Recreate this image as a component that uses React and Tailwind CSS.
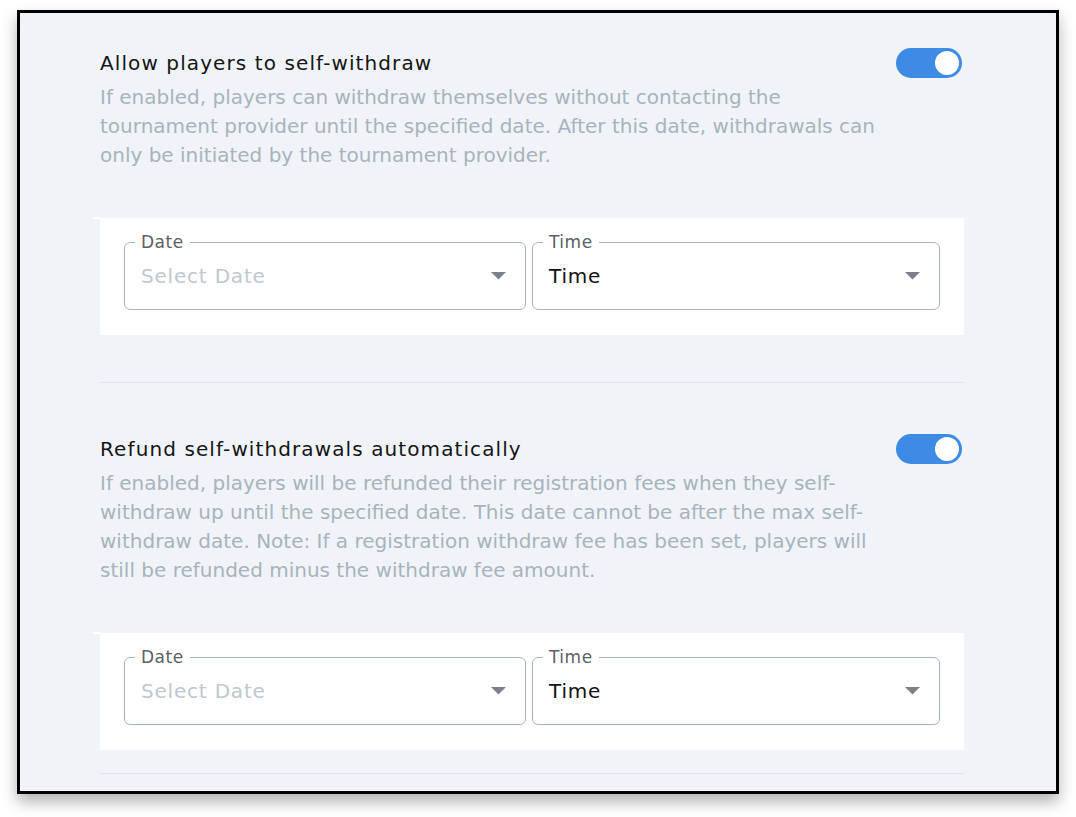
import { useState } from "react";

const Toggle = ({ on, onClick }) => (
  <button
    onClick={onClick}
    className={`relative shrink-0 w-[66px] h-[30px] rounded-full mr-[2px] transition-colors ${
      on ? "bg-[#3d8be5]" : "bg-[#c5ccd4]"
    }`}
  >
    <span
      className={`absolute top-[3px] w-[24px] h-[24px] rounded-full bg-white transition-all ${
        on ? "right-[3px]" : "left-[3px]"
      }`}
    />
  </button>
);

const Caret = () => (
  <svg width="15" height="8" viewBox="0 0 15 8" className="shrink-0">
    <path d="M0 0 L15 0 L7.5 7.5 Z" fill="#7b8089" />
  </svg>
);

const SelectField = ({ label, value, placeholder, width }) => (
  <div
    className={`relative h-[68px] ${width} border border-[#a9b3c1] rounded-[6px] flex items-center pl-4 pr-[19px]`}
  >
    <span className="absolute -top-[12px] left-[10px] bg-white px-[6px] text-[17px] leading-[22px] tracking-[0.5px] text-[#5c6067]">
      {label}
    </span>
    <span
      className={`flex-1 text-[20px] tracking-[0.8px] ${
        value ? "text-[#111]" : "text-[#bfc7cf]"
      }`}
    >
      {value || placeholder}
    </span>
    <Caret />
  </div>
);

const DatePanel = () => (
  <div className="relative bg-white px-6 pt-6 pb-[25px] flex gap-[6px]">
    <span className="absolute -left-[7px] -top-[1px] w-[8px] h-[2px] bg-white" />
    <SelectField label="Date" placeholder="Select Date" width="w-[402px]" />
    <SelectField label="Time" value="Time" width="w-[408px]" />
  </div>
);

const Section = ({ title, desc, on, onToggle }) => (
  <div>
    <div className="flex justify-between items-center h-[30px]">
      <h2 className="text-[20px] leading-[28px] tracking-[1.1px] text-[#151515]">
        {title}
      </h2>
      <Toggle on={on} onClick={onToggle} />
    </div>
    <p className="mt-[5px] w-[800px] text-[20px] leading-[29px] text-[#a9b3bc]">
      {desc}
    </p>
  </div>
);

export default function App() {
  const [selfWithdraw, setSelfWithdraw] = useState(true);
  const [autoRefund, setAutoRefund] = useState(true);

  return (
    <div
      className="bg-white w-[1076px] h-[817px] pl-[17px] pt-[10px]"
      style={{ fontFamily: '"DejaVu Sans", "Noto Sans", sans-serif' }}
    >
      <div className="w-[1042px] h-[784px] border-[3px] border-black bg-[#f0f3f8] shadow-[0_8px_14px_rgba(0,0,0,0.3)] overflow-hidden">
        <div className="ml-[80px] w-[864px] pt-[35px]">
          <Section
            title="Allow players to self-withdraw"
            desc="If enabled, players can withdraw themselves without contacting the tournament provider until the specified date. After this date, withdrawals can only be initiated by the tournament provider."
            on={selfWithdraw}
            onToggle={() => setSelfWithdraw(!selfWithdraw)}
          />
          <div className="mt-[48px]">
            <DatePanel />
          </div>
          <div className="mt-[47px] h-px bg-[#e0e5eb]" />
          <div className="mt-[51px]">
            <Section
              title="Refund self-withdrawals automatically"
              desc="If enabled, players will be refunded their registration fees when they self-withdraw up until the specified date. This date cannot be after the max self-withdraw date. Note: If a registration withdraw fee has been set, players will still be refunded minus the withdraw fee amount."
              on={autoRefund}
              onToggle={() => setAutoRefund(!autoRefund)}
            />
          </div>
          <div className="mt-[48px]">
            <DatePanel />
          </div>
          <div className="mt-[23px] h-px bg-[#e0e5eb]" />
        </div>
      </div>
    </div>
  );
}
